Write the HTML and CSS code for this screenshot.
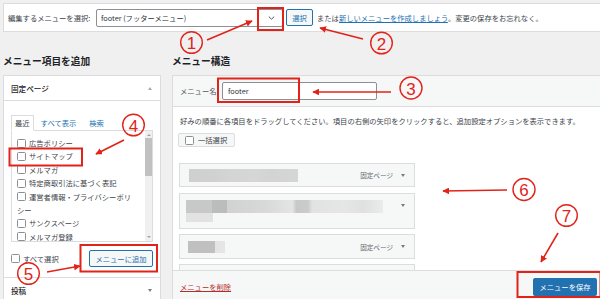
FILE: index.html
```html
<!DOCTYPE html>
<html lang="ja">
<head>
<meta charset="utf-8">
<title>メニュー</title>
<link rel="stylesheet" href="styles.css">
</head>
<body>
<div class="page">
  <div class="topbar">
    <span class="lbl">編集するメニューを選択:</span>
    <div class="select"><span>footer (フッターメニュー)</span>
      <svg class="chev" width="7" height="4" viewBox="0 0 7 4"><path d="M0.8 0.6 L3.5 3.2 L6.2 0.6" fill="none" stroke="#50575e" stroke-width="1"/></svg>
    </div>
    <span class="btn">選択</span>
    <span class="note">または<a class="lnk">新しいメニューを作成しましょう</a>。変更の保存をお忘れなく。</span>
  </div>

  <div class="cols">
    <div class="left">
      <h2>メニュー項目を追加</h2>
      <div class="box">
        <div class="sec-title open">固定ページ<span class="tri-up"></span></div>
        <div class="sec-body">
          <div class="tabs">
            <span class="tab active">最近</span>
            <span class="tab t2">すべて表示</span>
            <span class="tab t3">検索</span>
          </div>
          <div class="list">
            <ul>
              <li><span class="cb"></span>広告ポリシー</li>
              <li><span class="cb"></span>サイトマップ</li>
              <li><span class="cb"></span>メルマガ</li>
              <li><span class="cb"></span>特定商取引法に基づく表記</li>
              <li><span class="cb"></span>運営者情報・プライバシーポリシー</li>
              <li><span class="cb"></span>サンクスページ</li>
              <li><span class="cb"></span>メルマガ登録</li>
            </ul>
            <div class="scroll">
              <span class="sa up"></span>
              <span class="thumb"></span>
              <span class="sa down"></span>
            </div>
          </div>
          <div class="actions">
            <span class="selall"><span class="cb"></span>すべて選択</span>
            <span class="btn add">メニューに追加</span>
          </div>
        </div>
        <div class="sec-title">投稿<span class="tri-down"></span></div>
      </div>
    </div>

    <div class="right">
      <h2>メニュー構造</h2>
      <div class="mbox">
        <div class="mhead">
          <span class="mlabel">メニュー名</span>
          <span class="input">footer</span>
        </div>
        <div class="mbody">
          <p class="desc">好みの順番に各項目をドラッグしてください。項目の右側の矢印をクリックすると、追加設定オプションを表示できます。</p>
          <span class="bulk"><span class="cb"></span>一括選択</span>
          <div class="items">
            <div class="item h1">
              <div class="blur b1"></div>
              <span class="type">固定ページ</span><span class="tri-down"></span>
            </div>
            <div class="item h2i">
              <div class="blurs">
                <div class="blur b2"></div>
                <div class="blur b2s"></div>
              </div>
              <span class="tri-down top"></span>
            </div>
            <div class="item h3">
              <div class="blur b3"></div>
              <span class="type">固定ページ</span><span class="tri-down"></span>
            </div>
            <div class="item h4"></div>
          </div>
        </div>
        <div class="mfoot">
          <a class="del">メニューを削除</a>
          <span class="save">メニューを保存</span>
        </div>
      </div>
    </div>
  </div>

  <svg class="anno" width="600" height="299" viewBox="0 0 600 299">
    <defs>
      <marker id="ah" viewBox="0 0 10 10" refX="9" refY="5" markerWidth="4.2" markerHeight="4.2" orient="auto">
        <path d="M0 0 L10 5 L0 10 Z" fill="#e2231a"/>
      </marker>
    </defs>
    <g fill="none" stroke="#e2231a" stroke-width="2">
      <rect x="258" y="8" width="25" height="22"/>
      <rect x="218" y="78.5" width="81" height="23.5"/>
      <rect x="9.5" y="148.5" width="72.5" height="17"/>
      <rect x="80.5" y="245" width="76.5" height="26.5"/>
      <rect x="517.5" y="272" width="83" height="25"/>
    </g>
    <g stroke="#e2231a" stroke-width="1.6" marker-end="url(#ah)">
      <line x1="207" y1="40" x2="252" y2="21"/>
      <line x1="363" y1="39" x2="320" y2="28"/>
      <line x1="391" y1="92" x2="313" y2="92"/>
      <line x1="124" y1="140" x2="96" y2="154"/>
      <line x1="47" y1="272" x2="80" y2="266"/>
      <line x1="507" y1="190" x2="443" y2="191"/>
      <line x1="558" y1="233" x2="541" y2="262"/>
    </g>
    <g fill="none" stroke="#e2231a" stroke-width="1.4">
      <circle cx="191.5" cy="42.5" r="10.8"/>
      <circle cx="381.5" cy="43" r="10.8"/>
      <circle cx="411" cy="88" r="11"/>
      <circle cx="133.5" cy="125" r="10.8"/>
      <circle cx="28.5" cy="273.5" r="10.8"/>
      <circle cx="524" cy="189.5" r="11"/>
      <circle cx="566.5" cy="215.5" r="10.8"/>
    </g>
    <g class="num" fill="#e2231a" text-anchor="middle">
      <text x="191.5" y="49">1</text>
      <text x="381.5" y="49.5">2</text>
      <text x="411" y="94.5">3</text>
      <text x="133.5" y="131.5">4</text>
      <text x="28.5" y="280">5</text>
      <text x="524" y="196">6</text>
      <text x="566.5" y="222">7</text>
    </g>
  </svg>
</div>
</body>
</html>
```

FILE: styles.css
```css
* { box-sizing: border-box; }
html, body { margin: 0; padding: 0; }
body {
  background: #f0f0f1;
  font-family: "Noto Sans CJK JP", "Noto Sans", sans-serif;
  font-size: 7.3px;
  color: #3c434a;
  width: 600px;
  height: 299px;
  overflow: hidden;
}
.page {
  position: relative;
  width: 600px;
  height: 299px;
  overflow: hidden;
}

/* top bar */
.topbar {
  margin: 3px 0 0 3px;
  width: 610px;
  height: 29px;
  background: #fff;
  border: 1px solid #dcdcde;
  display: flex;
  align-items: center;
  padding-left: 4px;
  white-space: nowrap;
}
.lbl { width: 88px; }
.select {
  width: 187px;
  height: 18px;
  border: 1px solid #8c8f94;
  border-radius: 2px;
  display: flex;
  align-items: center;
  justify-content: space-between;
  padding: 0 7px 0 4px;
  color: #2c3338;
}
.chev { display: block; }
.btn {
  display: inline-flex;
  align-items: center;
  justify-content: center;
  height: 17px;
  border: 1px solid #2271b1;
  border-radius: 2px;
  background: #f6f7f7;
  color: #2271b1;
  padding: 0 4px;
}
.topbar .btn { margin-left: 3px; width: 27px; }
.note { margin-left: 4px; }
.lnk { color: #2271b1; text-decoration: underline; }

/* columns */
.cols {
  display: flex;
  gap: 11px;
  margin-top: 23px;
  padding-left: 3px;
}
h2 {
  margin: 0 0 8px;
  height: 12px;
  line-height: 12px;
  font-size: 9.7px;
  font-weight: 700;
  color: #1d2327;
}
.left { width: 158px; flex: none; }
.right { width: 432px; flex: none; }

.box {
  background: #fff;
  border: 1px solid #dcdcde;
}
.sec-title {
  height: 25px;
  display: flex;
  align-items: center;
  justify-content: space-between;
  padding: 0 8px 0 7px;
  font-size: 7.6px;
  font-weight: 500;
  color: #1d2327;
}
.sec-title.open { border-bottom: 1px solid #dcdcde; }
.tri-up, .tri-down {
  width: 0; height: 0;
  border-left: 2.5px solid transparent;
  border-right: 2.5px solid transparent;
}
.tri-up { border-bottom: 3px solid #a7aaad; }
.tri-down { border-top: 3px solid #787c82; }

.sec-body {
  padding: 14px 7px 10px 7px;
  border-bottom: 1px solid #dcdcde;
}
.tabs {
  display: flex;
  height: 16px;
  margin-bottom: -1px;
  position: relative;
}
.tab {
  display: flex;
  align-items: center;
  padding: 0 3px;
  color: #2271b1;
  border: 1px solid transparent;
}
.tab.active {
  color: #3c434a;
  border-color: #dcdcde;
  border-bottom-color: #fff;
  background: #fff;
}
.t2 { margin-left: 3px; }
.t3 { margin-left: 5px; }

.list {
  height: 112px;
  border: 1px solid #dcdcde;
  display: flex;
  overflow: hidden;
}
.list ul {
  list-style: none;
  margin: 0;
  padding: 6px 0 0 5px;
  width: 126px;
  flex: none;
}
.list li {
  line-height: 13.4px;
  color: #3c434a;
}
.cb {
  display: inline-block;
  width: 9px;
  height: 9px;
  border: 1px solid #8c8f94;
  border-radius: 1.5px;
  background: #fff;
  vertical-align: -1.5px;
  margin-right: 3px;
}
.scroll {
  margin-left: auto;
  width: 7px;
  background: #f0f0f1;
  display: flex;
  flex-direction: column;
  align-items: center;
}
.sa {
  width: 0; height: 0;
  border-left: 2px solid transparent;
  border-right: 2px solid transparent;
}
.sa.up { border-bottom: 2.5px solid #a3a3a3; margin-top: 3px; }
.sa.down { border-top: 2.5px solid #a3a3a3; margin-top: auto; margin-bottom: 3px; }
.thumb {
  width: 7px;
  height: 38px;
  background: #c1c1c1;
  margin-top: 2px;
}

.actions {
  margin-top: 8px;
  display: flex;
  align-items: center;
  justify-content: space-between;
}
.btn.add { width: 64px; height: 17px; }

/* right panel */
.mbox {
  border: 1px solid #dcdcde;
  background: #fff;
}
.mhead {
  height: 31px;
  background: #f6f7f7;
  border-bottom: 1px solid #dcdcde;
  display: flex;
  align-items: center;
  padding-left: 7px;
}
.mlabel { width: 42px; color: #50575e; }
.input {
  width: 155px;
  height: 18px;
  border: 1px solid #8c8f94;
  border-radius: 2px;
  background: #fff;
  display: flex;
  align-items: center;
  padding-left: 5px;
  color: #2c3338;
}
.mbody {
  height: 163px;
  overflow: hidden;
  padding: 9px 0 0 7px;
}
.desc {
  margin: 0;
  line-height: 11px;
  white-space: nowrap;
  color: #3c434a;
}
.bulk {
  display: inline-flex;
  align-items: center;
  margin: 6px 0 0 -2px;
  height: 14px;
  width: 57px;
  padding-left: 6px;
  border: 1px solid #dcdcde;
  border-radius: 2px;
  background: #f6f7f7;
}
.bulk .cb { margin-right: 4px; vertical-align: 0; }
.items {
  margin-top: 16px;
  margin-left: -1px;
  display: flex;
  flex-direction: column;
  gap: 5px;
  width: 236px;
}
.item {
  background: #f6f7f7;
  border: 1px solid #dcdcde;
  display: flex;
  align-items: center;
  padding: 0 9px;
}
.item.h1 { height: 24px; }
.item.h2i { height: 36px; align-items: flex-start; padding-left: 6px; margin-top: 1px; }
.item.h3 { height: 25px; padding-left: 8px; }
.item.h4 { height: 30px; }
.type {
  margin-left: auto;
  font-size: 6.6px;
  color: #646970;
  margin-right: 8px;
}
.blur { height: 13px; }
.b1 {
  width: 109px;
  background: linear-gradient(90deg, #cfcfcf 0, #d1d1d1 25%, #d4d4d4 37%, #d6d6d6 60%, #d3d3d3 75%, #d6d6d6 100%);
}
.blurs { padding-top: 6px; display: flex; flex-direction: column; }
.b2 {
  width: 197px;
  background: linear-gradient(90deg, #c8c8c8 0, #c8c8c8 13%, #bcbcbc 13%, #bcbcbc 21%, #d2d2d2 21%, #d8d8d8 40%, #e1e1e1 50%, #e4e4e4 54%, #c8c8c8 56%, #cbcbcb 62%, #e2e2e2 64%, #e6e6e6 80%, #e0e0e0 90%, #ebebeb 100%);
}
.b2s {
  width: 27px;
  height: 9px;
  background: #e2e2e2;
}
.tri-down.top { margin: 10px 0 0 auto; }
.b3 {
  width: 37px;
  height: 12px;
  background: linear-gradient(90deg, #c0c0c0 0, #c0c0c0 72%, #e3e3e3 72%, #e6e6e6 100%);
}

.mfoot {
  height: 30px;
  background: #f6f7f7;
  border-top: 1px solid #dcdcde;
  display: flex;
  align-items: center;
  justify-content: space-between;
  padding: 2px 6px 0 7px;
}
.del { color: #b32d2e; text-decoration: underline; }
.save {
  display: inline-flex;
  align-items: center;
  justify-content: center;
  width: 64px;
  height: 18px;
  background: #2271b1;
  color: #fff;
  border-radius: 2px;
}

/* annotations */
.anno {
  position: absolute;
  left: 0;
  top: 0;
  pointer-events: none;
}
.num text {
  font-family: "Liberation Sans", "DejaVu Sans", sans-serif;
  font-size: 17px;
}
```
